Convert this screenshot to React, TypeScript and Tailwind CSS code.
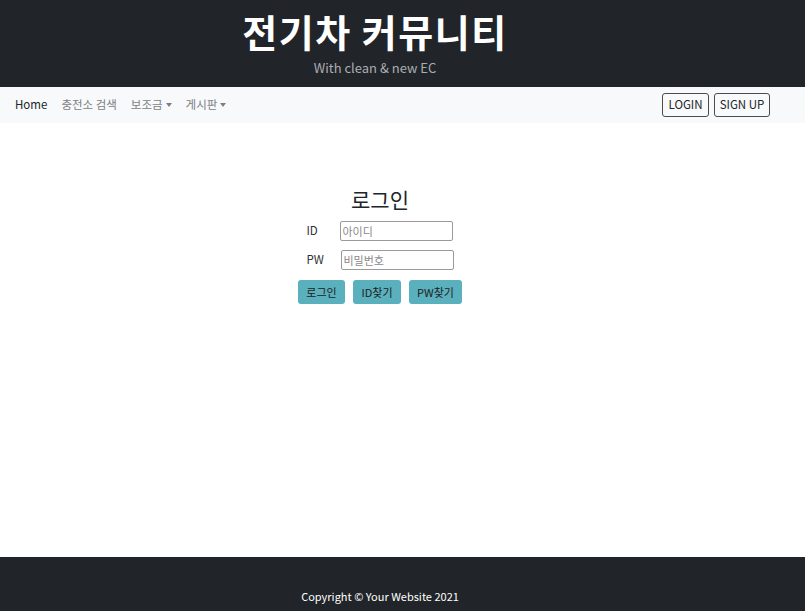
import React, { useState } from 'react';

const font = { fontFamily: '"Noto Sans CJK KR", "Noto Sans", sans-serif' };

export default function App() {
  const [id, setId] = useState('');
  const [pw, setPw] = useState('');

  return (
    <div className="min-h-screen flex flex-col bg-white text-[#212529]" style={font}>
      {/* header */}
      <header className="bg-[#212529] h-[87px]">
        <div className="w-[750px] flex flex-col items-center pt-[8px]">
          <h1 className="text-[38px] font-bold text-white leading-[46px] tracking-[1.5px]">전기차 커뮤니티</h1>
          <p className="text-[13px] text-[#a9adb2] leading-[18px] mt-[5px]">With clean &amp; new EC</p>
        </div>
      </header>

      {/* nav */}
      <nav className="bg-[#f8f9fa] h-[36px] flex items-center justify-between pl-[15px] pr-[35px]">
        <div className="flex items-center gap-[14px] text-[11.5px]">
          <a className="text-[#212529]">Home</a>
          <a className="text-[#7b7f84]">충전소 검색</a>
          <a className="text-[#7b7f84] flex items-center gap-[3px]">
            보조금
            <span className="border-t-[4px] border-t-[#7b7f84] border-x-[3.5px] border-x-transparent" />
          </a>
          <a className="text-[#7b7f84] flex items-center gap-[3px]">
            게시판
            <span className="border-t-[4px] border-t-[#7b7f84] border-x-[3.5px] border-x-transparent" />
          </a>
        </div>
        <div className="flex items-center gap-[5px] text-[11.5px]">
          <button className="h-[24px] w-[47px] border border-[#4a4d50] rounded-[3px] text-[#212529]">LOGIN</button>
          <button className="h-[24px] w-[56px] border border-[#4a4d50] rounded-[3px] text-[#212529]">SIGN UP</button>
        </div>
      </nav>

      {/* login */}
      <main className="flex-1 flex flex-col items-center pt-[62px] pr-[45px]">
        <h2 className="text-[21px] leading-[28px] text-[#212529]">로그인</h2>
        <div className="mt-[8px] flex flex-col gap-[9px] text-[11.5px]">
          <label className="flex items-center">
            <span className="w-[33px] text-[#2b2f33]">ID</span>
            <input
              value={id}
              onChange={(e) => setId(e.target.value)}
              placeholder="아이디"
              className="w-[113px] h-[20px] border border-[#9a9a9a] rounded-[2px] px-[2px] text-[11px] placeholder:text-[#8a8a8a]"
            />
          </label>
          <label className="flex items-center">
            <span className="w-[34px] text-[#2b2f33]">PW</span>
            <input
              type="password"
              value={pw}
              onChange={(e) => setPw(e.target.value)}
              placeholder="비밀번호"
              className="w-[113px] h-[20px] border border-[#9a9a9a] rounded-[2px] px-[2px] text-[11px] placeholder:text-[#8a8a8a]"
            />
          </label>
        </div>
        <div className="mt-[10px] flex gap-[8px] text-[11px]">
          <button className="w-[47px] h-[24px] bg-[#5bb0bd] rounded-[3px] text-[#1b1e21]">로그인</button>
          <button className="w-[48px] h-[24px] bg-[#5bb0bd] rounded-[3px] text-[#1b1e21]">ID찾기</button>
          <button className="w-[53px] h-[24px] bg-[#5bb0bd] rounded-[3px] text-[#1b1e21]">PW찾기</button>
        </div>
      </main>

      {/* footer */}
      <footer className="bg-[#212529] h-[54px] flex items-end justify-center pb-[7px] pr-[45px]">
        <p className="text-[11px] text-white">Copyright © Your Website 2021</p>
      </footer>
    </div>
  );
}
